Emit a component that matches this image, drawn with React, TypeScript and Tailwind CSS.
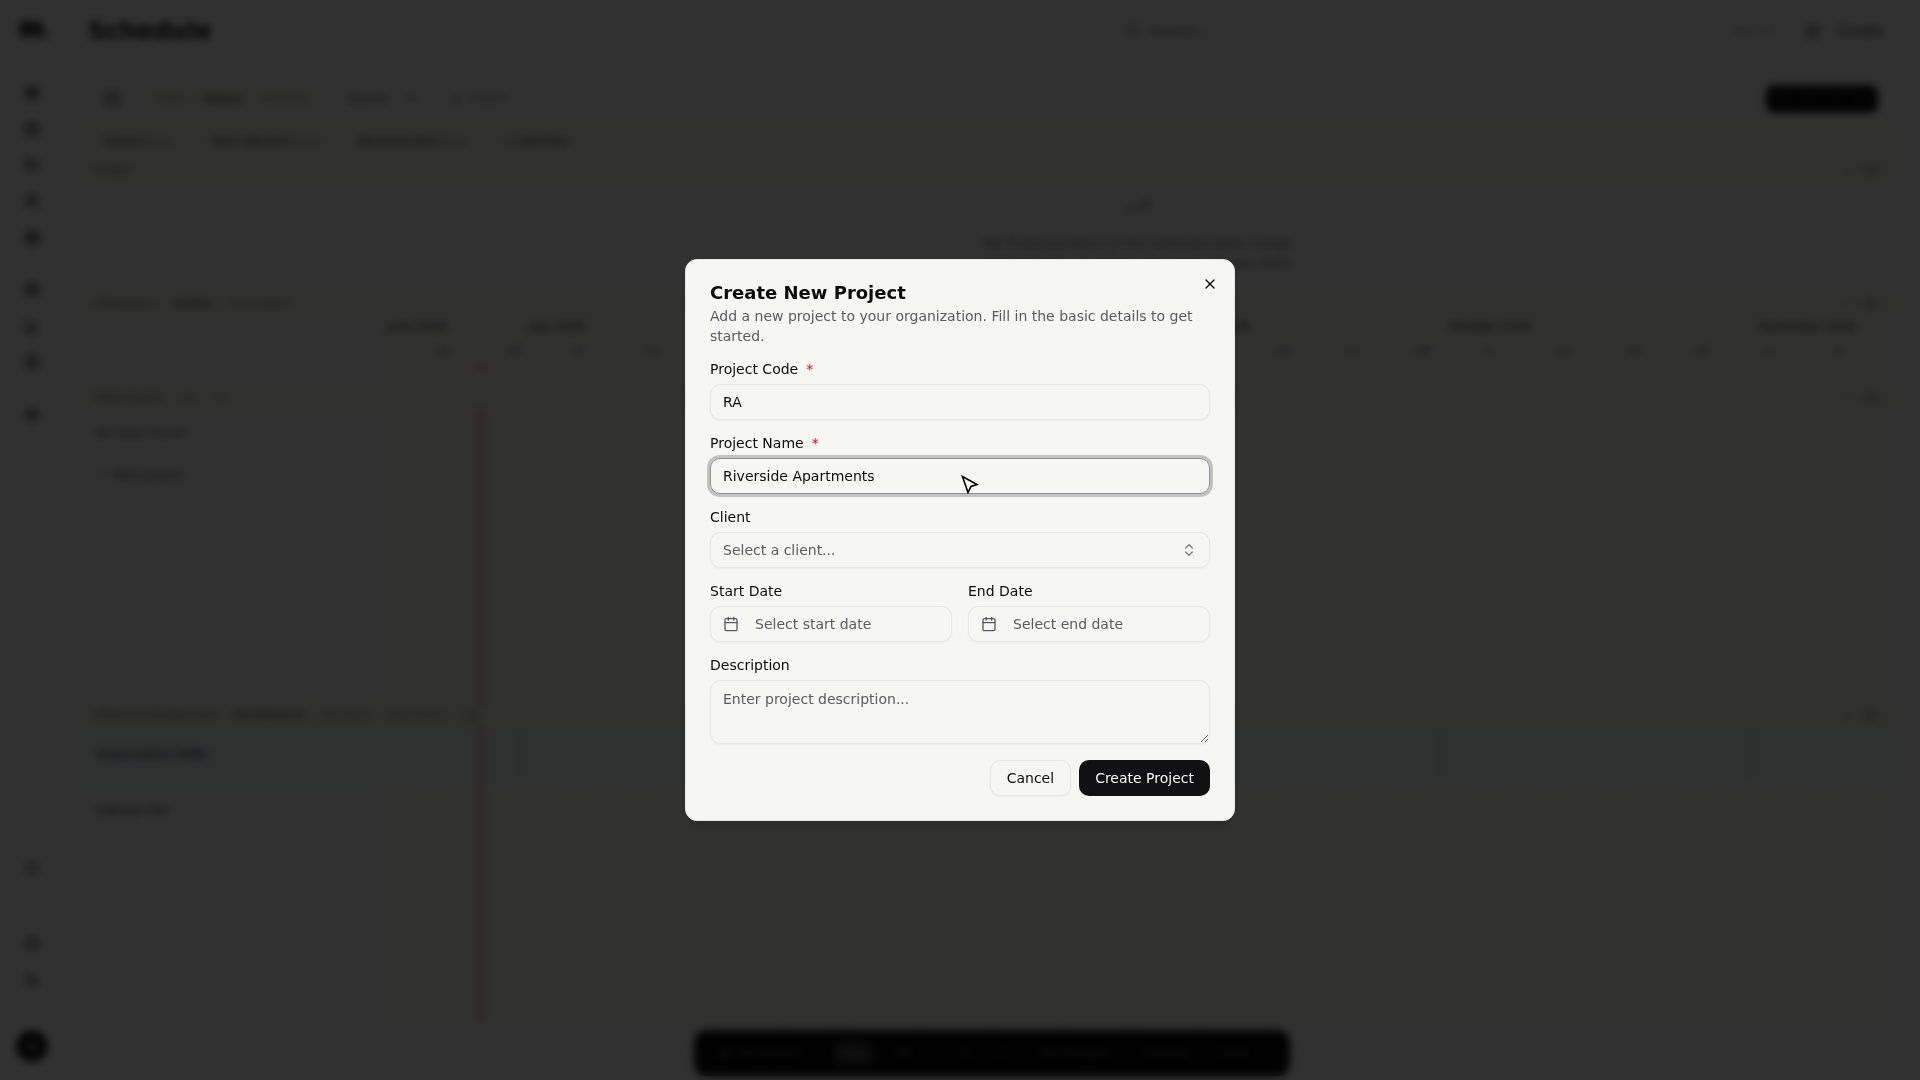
import {
    Bell,
    Briefcase,
    Building2,
    Calendar,
    CalendarDays,
    ChartColumn,
    ChevronDown,
    ChevronsUpDown,
    CircleHelp,
    CirclePlus,
    Download,
    FileText,
    FolderOpen,
    LayoutGrid,
    Moon,
    Pencil,
    Plus,
    Redo2,
    Search,
    Settings,
    TrendingUp,
    Undo2,
    Users,
    X,
} from "lucide-react";
import { useState, FormEvent, ReactNode } from "react";

interface Project {
    code: string;
    name: string;
    client: string;
    description: string;
}

const mainNav = [
    { label: "Dashboard", icon: LayoutGrid },
    { label: "Schedule", icon: CalendarDays },
    { label: "Projects", icon: FolderOpen },
    { label: "People", icon: Users },
    { label: "Clients", icon: Building2 },
];

const toolNav = [
    { label: "Roles", icon: Briefcase },
    { label: "Reports", icon: ChartColumn },
    { label: "Documents", icon: FileText },
];

// widths follow the day scale: 10px per day
const months = [
    { label: "June 2026", width: "w-[142px]" },
    { label: "July 2026", width: "w-[310px]" },
    { label: "August 2026", width: "w-[310px]" },
    { label: "September 2026", width: "w-[300px]" },
    { label: "October 2026", width: "w-[310px]" },
    { label: "November 2026", width: "w-[143px]" },
];

const weeks = [
    22, 29, 6, 13, 20, 27, 3, 10, 17, 24, 31, 7, 14, 21, 28, 5, 12, 19, 26, 2, 9,
];

const filters = ["Project", "Team Member", "Resource Role"];

const NavButton = ({ label, icon: Icon }: { label: string; icon: any }) => (
    <button aria-label={label} className="flex h-9 w-9 items-center justify-center">
        <Icon size={16} />
    </button>
);

const Sidebar = () => (
    <aside className="flex w-16 shrink-0 flex-col items-center pb-[18px] text-black">
        <svg width="30" height="18" viewBox="0 0 30 18" className="mt-5 mb-[37px] ml-1">
            <path d="M1 1h6v16H1zM9 1h6v16H9zM17 1h6v16h-6zM25 13h4v4h-4z" fill="#111113" />
        </svg>
        {mainNav.map((item) => (
            <NavButton key={item.label} {...item} />
        ))}
        <div className="h-[17px]" />
        {toolNav.map((item) => (
            <NavButton key={item.label} {...item} />
        ))}
        <div className="h-[17px]" />
        <NavButton label="Settings" icon={Settings} />
        <div className="flex-1" />
        <NavButton label="Notifications" icon={Bell} />
        <div className="h-10" />
        <NavButton label="Help" icon={CircleHelp} />
        <NavButton label="Theme" icon={Moon} />
        <button className="mt-8 h-8 w-8 rounded-full bg-[#111113] text-xs text-white">
            A
        </button>
    </aside>
);

const Header = () => (
    <header className="flex h-[60px] items-center pr-9 pl-6">
        <h1 className="flex-1 text-2xl font-bold">Schedule</h1>
        <button className="flex w-[648px] items-center gap-2 text-sm text-[#5a5a63]">
            <Search size={16} />
            <span className="flex-1 text-left">Search...</span>
            <kbd className="text-[11px]">Ctrl K</kbd>
        </button>
        <button className="ml-8 flex items-center gap-4 text-sm">
            <CirclePlus size={16} />
            Create
        </button>
    </header>
);

const Toolbar = () => (
    <div className="mr-[26px] ml-4 flex h-[52px] items-center pr-4 pl-6 text-[11px]">
        <button aria-label="Today">
            <Calendar size={16} />
        </button>
        <div className="ml-7 flex gap-5 rounded-md bg-[#f1f1e9] px-2 py-1">
            <button className="text-[#88888d]">Daily</button>
            <button>Weekly</button>
            <button className="text-[#88888d]">Monthly</button>
        </div>
        <button className="ml-6 flex items-center gap-4 px-2">
            Actuals
            <ChevronDown size={14} />
        </button>
        <button className="ml-6 flex items-center gap-2 text-[#66666c]">
            <Download size={14} />
            Export
        </button>
        <div className="ml-auto flex h-7 w-28 items-center justify-around rounded-lg bg-[#0b0b0c] px-1 text-[#777]">
            <button aria-label="Undo">
                <Undo2 size={12} />
            </button>
            <button aria-label="Redo">
                <Redo2 size={12} />
            </button>
            <button aria-label="Edit">
                <Pencil size={12} />
            </button>
            <button aria-label="Add">
                <Plus size={12} />
            </button>
        </div>
    </div>
);

const Band = ({ children }: { children: ReactNode }) => (
    <div className="flex h-[22px] shrink-0 items-center gap-5 bg-[#eeeee5] px-4 text-[11px] text-[#66666c]">
        {children}
        <div className="ml-auto flex items-center gap-3 text-[#88888d]">
            <ChevronDown size={10} />
            <Settings size={14} />
        </div>
    </div>
);

const Track = ({ tone }: { tone: string }) => (
    <div className={`relative flex min-w-0 flex-1 overflow-hidden ${tone}`}>
        <div className="w-[52px] shrink-0" />
        {weeks.map((week, i) => (
            <div key={i} className="w-[70px] shrink-0 border-l-2 border-[#e2e2ea]" />
        ))}
        {/* month boundaries */}
        <div className="absolute inset-0 flex">
            {months.map((month) => (
                <div
                    key={month.label}
                    className={`shrink-0 border-r-2 border-[#dcdce6] ${month.width}`}
                />
            ))}
        </div>
        {/* today */}
        <div className="absolute inset-y-0 left-[101px] w-[3px] bg-[#f0607a]" />
    </div>
);

const Schedule = () => (
    <section className="mr-[26px] ml-4 flex min-h-0 flex-1 flex-col bg-[#f6f6f6]">
        <div className="flex h-[34px] items-center gap-10 bg-[#f0f0e8] px-6 text-[11px]">
            {filters.map((filter) => (
                <button key={filter} className="flex items-center">
                    {filter}
                    <span className="text-[#88888d]">(Any)</span>
                </button>
            ))}
            <button>+ Add filter</button>
        </div>
        <Band>Graph</Band>
        <div className="flex h-28 shrink-0 flex-col items-center pt-3 pl-[300px] text-sm text-[#66666c]">
            <TrendingUp size={28} className="mb-3 text-[#88888d]" />
            <p>No financial data in the selected date range</p>
            <p>Add projects or widen the range to see data</p>
        </div>
        <Band>
            <span>Milestones</span>
            <button className="text-[#222]">Details</button>
            <button className="text-[#88888d]">By Project</button>
        </Band>
        <div className="flex h-[72px] shrink-0">
            <div className="w-[298px] shrink-0" />
            <div className="min-w-0 flex-1 overflow-hidden bg-[#f5f5f0] text-xs">
                <div className="flex h-6">
                    {months.map((month) => (
                        <div
                            key={month.label}
                            className={`shrink-0 overflow-hidden border-l border-[#e0e0d8] pl-2 leading-6 whitespace-nowrap ${month.width}`}
                        >
                            {month.label}
                        </div>
                    ))}
                </div>
                <div className="flex h-6 pl-[52px] text-[#5a5a63]">
                    {weeks.map((week, i) => (
                        <div
                            key={i}
                            className="w-[70px] shrink-0 border-l border-[#e4e4e8] pl-1 leading-6"
                        >
                            {week}
                        </div>
                    ))}
                </div>
                <div className="ml-[99px] h-2 w-2 rounded-full bg-[#f5a0b0]" />
            </div>
        </div>
        <Band>
            <span>Sales board</span>
            <span>v1</span>
            <ChevronDown size={14} />
        </Band>
        <div className="flex min-h-0 flex-1">
            <div className="w-[298px] shrink-0 px-4 pt-3 text-xs text-[#44444a]">
                <p className="h-[42px] pt-1">No tasks found</p>
                <button className="flex items-center gap-1 pt-1">
                    <Plus size={12} />
                    New project
                </button>
            </div>
            <Track tone="bg-[#f4f4ed]" />
        </div>
        <Band>
            <span>Resource Assignment</span>
            <button className="text-[#222]">By Resource</button>
            <button className="text-[#88888d]">By Team</button>
            <button className="text-[#88888d]">By Project</button>
            <Search size={14} />
        </Band>
        <div className="flex h-[60px] shrink-0">
            <div className="w-[298px] shrink-0 bg-[#e9eef0] px-4 pt-5 text-xs">
                Organization Wide
            </div>
            <Track tone="bg-[#e9f0ee]" />
        </div>
        <div className="flex h-[238px] shrink-0">
            <div className="w-[298px] shrink-0 px-4 pt-4 text-xs">Internal Use</div>
            <Track tone="bg-[#f4f4ed]" />
        </div>
    </section>
);

const DraftBar = () => (
    <div className="absolute bottom-1 left-[694px] flex h-[46px] w-[596px] items-center rounded-xl bg-[#050505] px-6 text-xs text-[#6a6a6a]">
        <button className="flex items-center gap-2">
            <Pencil size={14} />
            No project
        </button>
        <button className="ml-8 rounded-md bg-[#333] px-2 py-1 text-[#999]">Day</button>
        <button className="ml-5">Off</button>
        <button className="ml-12" aria-label="Undo change">
            <Undo2 size={14} />
        </button>
        <button className="ml-5" aria-label="Redo change">
            <Redo2 size={14} />
        </button>
        <span className="ml-8">No changes</span>
        <button className="ml-8">Discard</button>
        <button className="ml-8">Save</button>
    </div>
);

const Field = ({
    id,
    label,
    required,
    children,
}: {
    id: string;
    label: string;
    required?: boolean;
    children: ReactNode;
}) => (
    <div className="grid gap-2">
        <label htmlFor={id} className="flex gap-2 text-sm leading-none font-medium">
            {label}
            {required && <span className="text-[#e7000b]">*</span>}
        </label>
        {children}
    </div>
);

const inputStyle =
    "block h-9 w-full rounded-[10px] border bg-transparent px-3 text-sm shadow-xs outline-none";

const CreateProjectDialog = ({ onClose }: { onClose: () => void }) => {
    const [project, setProject] = useState<Project>({
        code: "RA",
        name: "Riverside Apartments",
        client: "",
        description: "",
    });

    const updateProject = (field: keyof Project, value: string) => {
        setProject((prev) => ({ ...prev, [field]: value }));
    };

    const handleSubmit = (e: FormEvent) => {
        e.preventDefault();
        onClose();
    };

    return (
        <div className="fixed inset-0 z-50 flex items-center justify-center bg-black/80 backdrop-blur-xs">
            <div
                role="dialog"
                aria-modal="true"
                aria-labelledby="dialog-title"
                className="relative w-full max-w-[550px] rounded-xl border border-[#e6e7e2] bg-[#f6f7f2] p-6 shadow-lg"
            >
                <button
                    aria-label="Close"
                    className="absolute top-4 right-4"
                    onClick={onClose}
                >
                    <X size={16} />
                </button>
                <h2 id="dialog-title" className="text-lg leading-none font-semibold">
                    Create New Project
                </h2>
                <p className="mt-1 text-sm text-[#5a5a63]">
                    Add a new project to your organization. Fill in the basic details
                    to get started.
                </p>
                <form className="mt-4 grid gap-4" onSubmit={handleSubmit}>
                    <Field id="code" label="Project Code" required>
                        <input
                            id="code"
                            type="text"
                            className={`${inputStyle} border-[#e6e7e2]`}
                            value={project.code}
                            onChange={(e) => updateProject("code", e.target.value)}
                        />
                    </Field>
                    <Field id="name" label="Project Name" required>
                        <div className="relative">
                            <input
                                id="name"
                                type="text"
                                className={`${inputStyle} border-[#8e8e96] ring-3 ring-[#c1c1c4]`}
                                value={project.name}
                                onChange={(e) => updateProject("name", e.target.value)}
                            />
                            {/* pointer */}
                            <svg
                                width="20"
                                height="20"
                                viewBox="0 0 20 20"
                                className="pointer-events-none absolute top-4 left-1/2"
                            >
                                <path
                                    d="M2.5 2.5 L17 10.5 L11 12.5 L8 18.5 Z"
                                    fill="#fff"
                                    stroke="#000"
                                    strokeWidth="1.6"
                                />
                            </svg>
                        </div>
                    </Field>
                    <Field id="client" label="Client">
                        <div className="relative">
                            <select
                                id="client"
                                className={`${inputStyle} appearance-none border-[#e6e7e2] text-[#5a5a63]`}
                                value={project.client}
                                onChange={(e) => updateProject("client", e.target.value)}
                            >
                                <option value="">Select a client...</option>
                            </select>
                            <ChevronsUpDown
                                size={16}
                                className="pointer-events-none absolute top-[10px] right-[13px] opacity-50"
                            />
                        </div>
                    </Field>
                    <div className="grid grid-cols-2 gap-4">
                        <Field id="start" label="Start Date">
                            <button
                                id="start"
                                type="button"
                                className="flex h-9 items-center gap-4 rounded-[10px] border border-[#e6e7e2] px-3 text-sm text-[#5a5a63] shadow-xs"
                            >
                                <Calendar size={16} />
                                Select start date
                            </button>
                        </Field>
                        <Field id="end" label="End Date">
                            <button
                                id="end"
                                type="button"
                                className="flex h-9 items-center gap-4 rounded-[10px] border border-[#e6e7e2] px-3 text-sm text-[#5a5a63] shadow-xs"
                            >
                                <Calendar size={16} />
                                Select end date
                            </button>
                        </Field>
                    </div>
                    <Field id="description" label="Description">
                        <textarea
                            id="description"
                            placeholder="Enter project description..."
                            className="block h-16 w-full rounded-[10px] border border-[#e6e7e2] bg-transparent px-3 py-2 text-sm shadow-xs outline-none placeholder:text-[#5a5a63]"
                            value={project.description}
                            onChange={(e) =>
                                updateProject("description", e.target.value)
                            }
                        />
                    </Field>
                    <div className="flex justify-end gap-2">
                        <button
                            type="button"
                            className="h-9 rounded-[10px] border border-[#e6e7e2] px-4 text-sm font-medium shadow-xs"
                            onClick={onClose}
                        >
                            Cancel
                        </button>
                        <button
                            type="submit"
                            className="h-9 rounded-[10px] bg-[#111113] px-4 text-sm font-medium text-[#f6f7f2]"
                        >
                            Create Project
                        </button>
                    </div>
                </form>
            </div>
        </div>
    );
};

export default function App() {
    const [open, setOpen] = useState(true);

    return (
        <div className="relative flex h-screen overflow-hidden bg-[#f6f6f6] font-['DejaVu_Sans',sans-serif] text-[#0c0c0e]">
            <Sidebar />
            <main className="flex min-w-0 flex-1 flex-col pt-px pb-14">
                <Header />
                <div className="pt-3">
                    <Toolbar />
                </div>
                <Schedule />
            </main>
            <DraftBar />
            {open && <CreateProjectDialog onClose={() => setOpen(false)} />}
        </div>
    );
}
